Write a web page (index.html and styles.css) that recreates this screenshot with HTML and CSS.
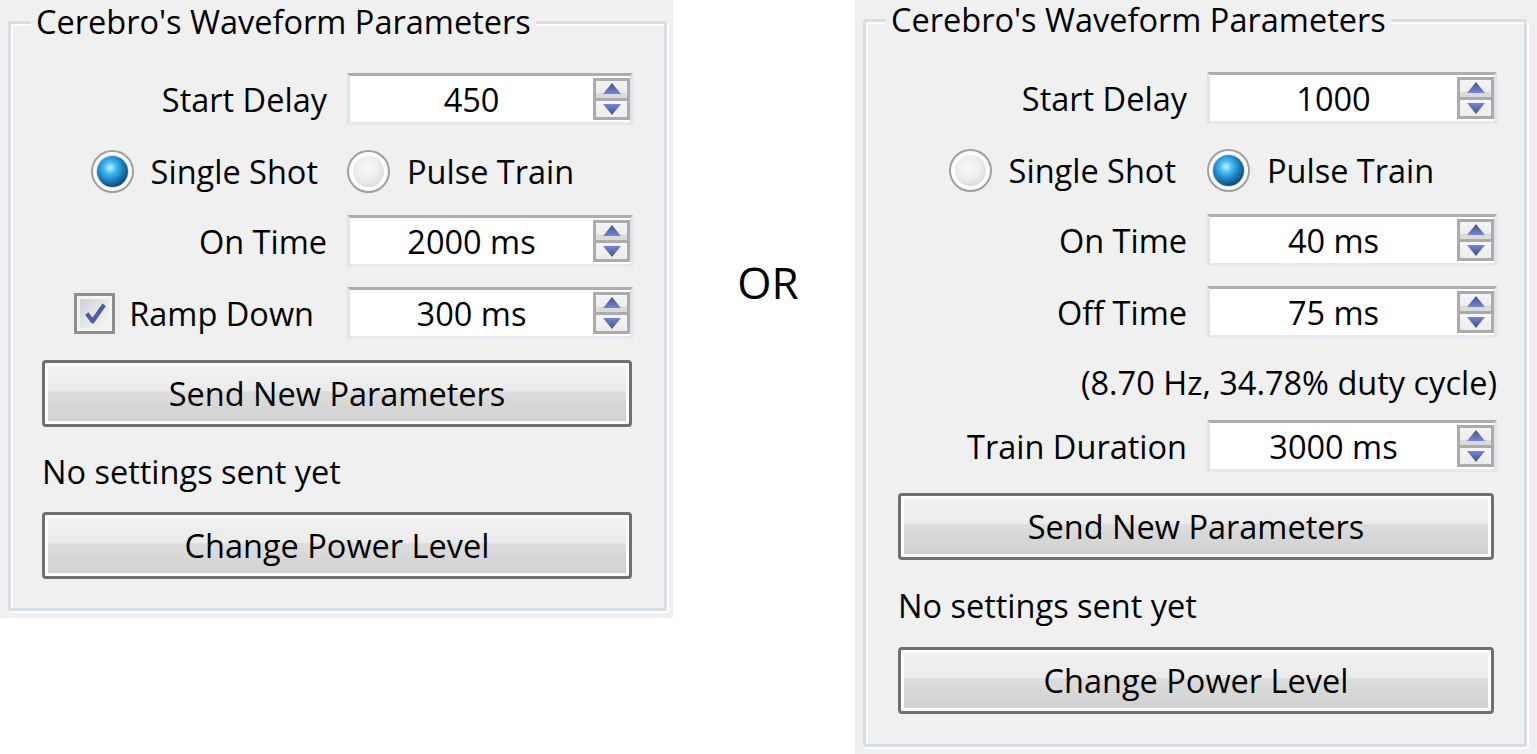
FILE: index.html
```html
<!DOCTYPE html>
<html lang="en">
<head>
<meta charset="utf-8">
<title>Cerebro's Waveform Parameters</title>
<link rel="stylesheet" href="styles.css">
</head>
<body>
<div class="page">
  <section class="panel panel-left">
    <div class="group">
      <div class="group-title">Cerebro's Waveform Parameters</div>

      <div class="row row-field row-top">
        <span class="label">Start Delay</span>
        <div class="spin">
          <span class="spin-value">450</span>
          <div class="spin-btns">
            <span class="spin-btn"><svg class="arrow" viewBox="0 0 18 12"><defs><linearGradient id="gu1" x1="0" y1="0" x2="0" y2="1"><stop offset="0" stop-color="#45507f"/><stop offset="1" stop-color="#7187dc"/></linearGradient></defs><polygon points="9,0 18,11 0,11" fill="url(#gu1)"/></svg></span>
            <span class="spin-btn"><svg class="arrow" viewBox="0 0 18 12"><defs><linearGradient id="gd1" x1="0" y1="0" x2="0" y2="1"><stop offset="0" stop-color="#7187dc"/><stop offset="1" stop-color="#45507f"/></linearGradient></defs><polygon points="0,1 18,1 9,12" fill="url(#gd1)"/></svg></span>
          </div>
        </div>
      </div>

      <div class="row row-radio">
        <label class="choice choice-first"><span class="radio checked"></span><span>Single Shot</span></label>
        <label class="choice"><span class="radio"></span><span>Pulse Train</span></label>
      </div>

      <div class="row row-field row-gap-s">
        <span class="label">On Time</span>
        <div class="spin">
          <span class="spin-value">2000 ms</span>
          <div class="spin-btns">
            <span class="spin-btn"><svg class="arrow" viewBox="0 0 18 12"><polygon points="9,0 18,11 0,11" fill="url(#gu1)"/></svg></span>
            <span class="spin-btn"><svg class="arrow" viewBox="0 0 18 12"><polygon points="0,1 18,1 9,12" fill="url(#gd1)"/></svg></span>
          </div>
        </div>
      </div>

      <div class="row row-field">
        <label class="choice choice-check"><span class="checkbox"><svg viewBox="0 0 30 30"><polyline points="7,15 13,23 25,6" fill="none" stroke="#4d5f9f" stroke-width="4.5" stroke-linejoin="round"/></svg></span><span>Ramp Down</span></label>
        <div class="spin">
          <span class="spin-value">300 ms</span>
          <div class="spin-btns">
            <span class="spin-btn"><svg class="arrow" viewBox="0 0 18 12"><polygon points="9,0 18,11 0,11" fill="url(#gu1)"/></svg></span>
            <span class="spin-btn"><svg class="arrow" viewBox="0 0 18 12"><polygon points="0,1 18,1 9,12" fill="url(#gd1)"/></svg></span>
          </div>
        </div>
      </div>

      <button class="btn btn-first">Send New Parameters</button>
      <div class="status">No settings sent yet</div>
      <button class="btn btn-last">Change Power Level</button>
    </div>
  </section>

  <div class="or">OR</div>

  <section class="panel panel-right">
    <div class="group">
      <div class="group-title">Cerebro's Waveform Parameters</div>

      <div class="row row-field row-top">
        <span class="label">Start Delay</span>
        <div class="spin">
          <span class="spin-value">1000</span>
          <div class="spin-btns">
            <span class="spin-btn"><svg class="arrow" viewBox="0 0 18 12"><polygon points="9,0 18,11 0,11" fill="url(#gu1)"/></svg></span>
            <span class="spin-btn"><svg class="arrow" viewBox="0 0 18 12"><polygon points="0,1 18,1 9,12" fill="url(#gd1)"/></svg></span>
          </div>
        </div>
      </div>

      <div class="row row-radio">
        <label class="choice choice-first"><span class="radio"></span><span>Single Shot</span></label>
        <label class="choice"><span class="radio checked"></span><span>Pulse Train</span></label>
      </div>

      <div class="row row-field row-gap-s">
        <span class="label">On Time</span>
        <div class="spin">
          <span class="spin-value">40 ms</span>
          <div class="spin-btns">
            <span class="spin-btn"><svg class="arrow" viewBox="0 0 18 12"><polygon points="9,0 18,11 0,11" fill="url(#gu1)"/></svg></span>
            <span class="spin-btn"><svg class="arrow" viewBox="0 0 18 12"><polygon points="0,1 18,1 9,12" fill="url(#gd1)"/></svg></span>
          </div>
        </div>
      </div>

      <div class="row row-field">
        <span class="label">Off Time</span>
        <div class="spin">
          <span class="spin-value">75 ms</span>
          <div class="spin-btns">
            <span class="spin-btn"><svg class="arrow" viewBox="0 0 18 12"><polygon points="9,0 18,11 0,11" fill="url(#gu1)"/></svg></span>
            <span class="spin-btn"><svg class="arrow" viewBox="0 0 18 12"><polygon points="0,1 18,1 9,12" fill="url(#gd1)"/></svg></span>
          </div>
        </div>
      </div>

      <div class="info">(8.70 Hz, 34.78% duty cycle)</div>

      <div class="row row-field row-after-info">
        <span class="label">Train Duration</span>
        <div class="spin">
          <span class="spin-value">3000 ms</span>
          <div class="spin-btns">
            <span class="spin-btn"><svg class="arrow" viewBox="0 0 18 12"><polygon points="9,0 18,11 0,11" fill="url(#gu1)"/></svg></span>
            <span class="spin-btn"><svg class="arrow" viewBox="0 0 18 12"><polygon points="0,1 18,1 9,12" fill="url(#gd1)"/></svg></span>
          </div>
        </div>
      </div>

      <button class="btn btn-first">Send New Parameters</button>
      <div class="status">No settings sent yet</div>
      <button class="btn btn-last">Change Power Level</button>
    </div>
  </section>
</div>
</body>
</html>
```

FILE: styles.css
```css
* { box-sizing: border-box; }

html, body {
  margin: 0;
  padding: 0;
  background: #ffffff;
}

body {
  font-family: "Open Sans", "Noto Sans", sans-serif;
  font-size: 32.5px;
  color: #000;
  width: 1537px;
  height: 754px;
  overflow: hidden;
}

.page {
  display: flex;
  align-items: flex-start;
}

.panel {
  background: #f0f0f0;
  padding-left: 8px;
}

.panel-left {
  width: 673px;
  padding-top: 21px;
  padding-bottom: 7px;
  --label-w: 285px;
  --field-w: 286px;
  --first-pad: 9px;
  --check-pad: 13px;
}

.panel-right {
  width: 682px;
  height: 754px;
  padding-top: 19px;
  --label-w: 289px;
  --field-w: 290px;
  --first-pad: 11px;
  --check-pad: 13px;
}

.group {
  position: relative;
  border: 3px solid #d6dfe7;
  border-radius: 3px;
  box-shadow: inset 2px 2px 0 #ffffff, 2px 2px 0 #ffffff;
  display: flex;
  flex-direction: column;
}

.panel-left .group {
  width: 659px;
  padding: 49px 31px 29px 31px;
}

.panel-right .group {
  width: 664px;
  padding: 50px 27px 30px 32px;
}

.group-title {
  position: absolute;
  left: 20px;
  top: -24px;
  height: 44px;
  line-height: 44px;
  padding: 0 5px;
  background: #f0f0f0;
  white-space: nowrap;
}

.row {
  display: grid;
  grid-template-columns: var(--label-w) var(--field-w);
  column-gap: 20px;
  align-items: center;
  height: 52px;
  margin-top: 20px;
}

.row-top { margin-top: 0; }

.row-gap-s { margin-top: 18px; }

.label {
  justify-self: end;
  white-space: nowrap;
}

.choice {
  display: flex;
  align-items: center;
  gap: 17px;
  white-space: nowrap;
}

.choice-first {
  justify-self: end;
  padding-right: var(--first-pad);
}

.choice-check {
  justify-self: end;
  padding-right: var(--check-pad);
  gap: 14px;
}

/* Spin box */
.spin {
  display: flex;
  align-items: stretch;
  height: 52px;
  background: #ffffff;
  border-style: solid;
  border-width: 3px;
  border-color: #abadb3 #e2e3ea #e3e9ef #e2e3ea;
}

.spin-value {
  flex: 1;
  display: flex;
  align-items: center;
  justify-content: center;
  white-space: nowrap;
}

.spin-btns {
  width: 37px;
  margin: 2px 0 2px 0;
  display: flex;
  flex-direction: column;
  border: 3px solid #ababab;
  background: #ababab;
  gap: 3px;
}

.spin-btn {
  flex: 1;
  display: flex;
  align-items: center;
  justify-content: center;
  background: linear-gradient(#f4f4f4 0%, #ececec 70%, #dadada 72%, #dadada 100%);
}

.spin-btn + .spin-btn {
  background: linear-gradient(#f6f6f6 0%, #ececec 100%);
}

.arrow {
  width: 18px;
  height: 12px;
  display: block;
}

/* Radio */
.radio {
  width: 43px;
  height: 43px;
  border-radius: 50%;
  border: 2px solid #a0a0a0;
  background: #fdfdfd;
  padding: 4px;
  flex: none;
}

.radio::after {
  content: "";
  display: block;
  width: 100%;
  height: 100%;
  border-radius: 50%;
  background: radial-gradient(circle at 45% 40%, #f8f8f8 0%, #eeeeee 45%, #dadada 80%, #c8c8c8 100%);
}

.radio.checked::after {
  background: radial-gradient(circle at 42% 38%, #c8f4ff 0%, #48bdf2 22%, #1b82c2 48%, #0d4e7e 72%, #143552 82%, #143552 100%);
  box-shadow: 0 0 0 1px #e0e0e0;
}

/* Checkbox */
.checkbox {
  width: 41px;
  height: 41px;
  border: 3px solid #8e8f8f;
  padding: 3px;
  background: #f4f4f4;
  flex: none;
  display: flex;
}

.checkbox svg {
  width: 100%;
  height: 100%;
  display: block;
  background: linear-gradient(135deg, #cbcdd2 0%, #e4e5e8 45%, #f6f6f6 100%);
}

/* Buttons */
.btn {
  font: inherit;
  color: #000;
  height: 67px;
  margin-top: 21px;
  border: 3px solid #707070;
  border-radius: 4px;
  background: linear-gradient(#f2f2f2 0%, #ebebeb 45%, #dddddd 47%, #cfcfcf 100%);
  box-shadow: inset 0 0 0 3px #fbfbfb;
  padding: 0;
  text-align: center;
}

.panel-left .btn { width: 590px; }
.panel-right .btn { width: 596px; }

.btn-last { margin-top: 15px; }
.panel-right .btn-last { margin-top: 16px; }

.status {
  height: 52px;
  margin-top: 18px;
  display: flex;
  align-items: center;
  white-space: nowrap;
}

.panel-right .status { margin-top: 19px; }

.info {
  height: 52px;
  margin-top: 18px;
  display: flex;
  align-items: center;
  justify-content: flex-end;
  white-space: nowrap;
}

.row-after-info { margin-top: 12px; }

/* OR */
.or {
  width: 182px;
  margin-top: 260px;
  padding-left: 8px;
  text-align: center;
  font-size: 44px;
  line-height: 44px;
}
```
